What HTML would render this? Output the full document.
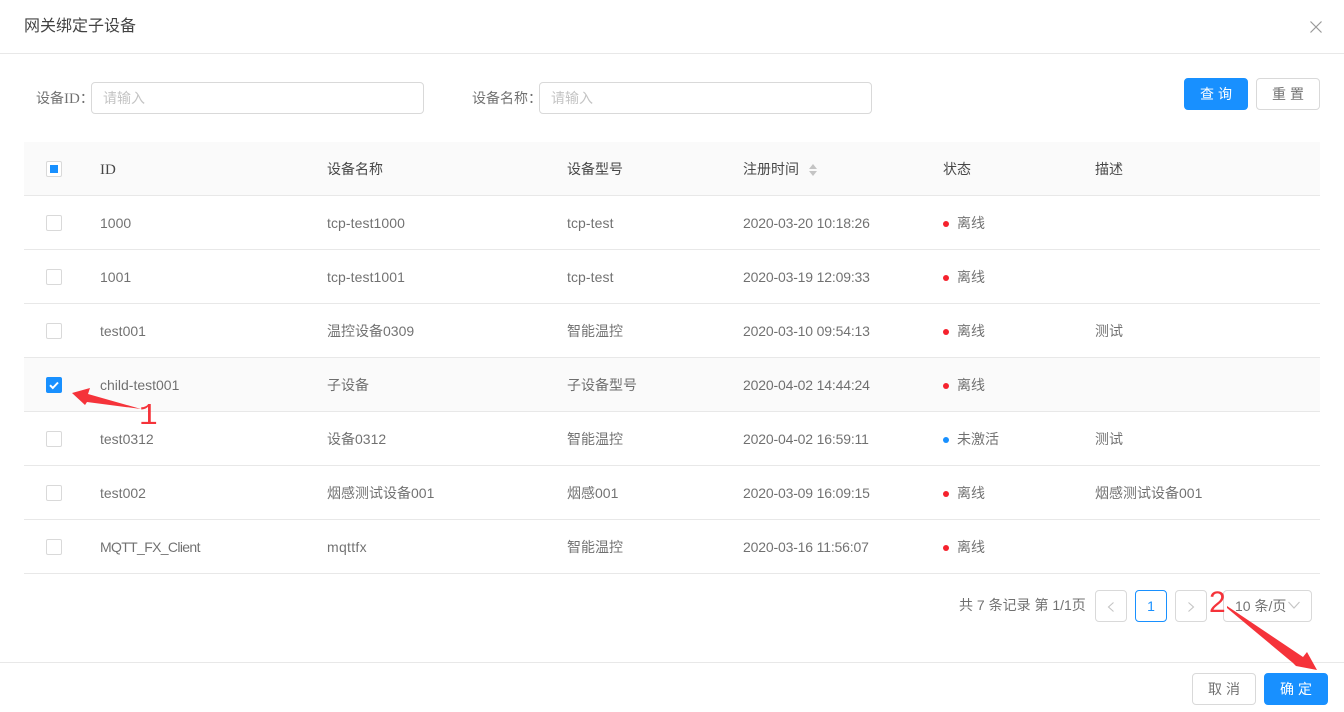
<!DOCTYPE html>
<html><head><meta charset="utf-8"><style>
html,body{margin:0;padding:0;background:#fff}
body{width:1344px;height:712px;position:relative;overflow:hidden;font-family:"Liberation Sans","Noto Sans CJK SC",sans-serif;font-size:14px;color:rgba(0,0,0,.56)}
.a{position:absolute;white-space:nowrap;line-height:20px}
.l{position:absolute;height:1px;background:#e8e8e8}
.cb{position:absolute;left:46px;width:14px;height:14px;border:1px solid #d9d9d9;border-radius:2px;background:#fff}
.h{color:rgba(0,0,0,.72);top:159px}
.t{letter-spacing:-.17px}
.s{letter-spacing:.08px}
.box{position:absolute;box-sizing:border-box;border:1px solid #d9d9d9;border-radius:4px;background:#fff}
.btn{position:absolute;box-sizing:border-box;height:32px;width:64px;border-radius:4px;border:1px solid #d9d9d9;background:#fff;text-align:center;line-height:30px;letter-spacing:4px;text-indent:4px}
.p{background:#1890ff;border-color:#1890ff;color:#fff}
.d{position:absolute;left:943px;width:6px;height:6px;border-radius:50%;background:#f5222d}
.f{font-family:"Liberation Serif",serif;font-size:15px}
</style></head><body>
<div class="a" style="left:24px;top:16px;font-size:16px;line-height:22px;color:rgba(0,0,0,.74)">网关绑定子设备</div>
<svg style="position:absolute;left:1310px;top:21px" width="12" height="12" viewBox="0 0 12 12"><path d="M.5.5l11 11M11.500.5l-11 11" stroke="#999" stroke-width="1.200" fill="none"/></svg>
<div class="l" style="left:0;top:53px;width:1344px"></div>

<div class="a" style="left:36px;top:88px"><span>设备</span><span class="f">ID</span>：</div>
<div class="box" style="left:91px;top:82px;width:333px;height:32px"></div>
<div class="a" style="left:103px;top:88px;color:#c4c4c4">请输入</div>
<div class="a" style="left:472px;top:88px">设备名称：</div>
<div class="box" style="left:539px;top:82px;width:333px;height:32px"></div>
<div class="a" style="left:551px;top:88px;color:#c4c4c4">请输入</div>
<div class="btn p" style="left:1184px;top:78px">查询</div>
<div class="btn" style="left:1256px;top:78px">重置</div>

<div style="position:absolute;left:24px;top:142px;width:1296px;height:53px;background:#fafafa"></div>
<div style="position:absolute;left:24px;top:358px;width:1296px;height:53px;background:#fafafa"></div>
<div class="l" style="left:24px;top:195px;width:1296px"></div>
<div class="l" style="left:24px;top:249px;width:1296px"></div>
<div class="l" style="left:24px;top:303px;width:1296px"></div>
<div class="l" style="left:24px;top:357px;width:1296px"></div>
<div class="l" style="left:24px;top:411px;width:1296px"></div>
<div class="l" style="left:24px;top:465px;width:1296px"></div>
<div class="l" style="left:24px;top:519px;width:1296px"></div>
<div class="l" style="left:24px;top:573px;width:1296px"></div>

<div class="cb" style="top:161px"></div>
<div style="position:absolute;left:50px;top:165px;width:8px;height:8px;background:#1890ff"></div>
<div class="a h f" style="left:100px;top:160px">ID</div>
<div class="a h" style="left:327px">设备名称</div>
<div class="a h" style="left:567px">设备型号</div>
<div class="a h" style="left:743px">注册时间</div>
<svg style="position:absolute;left:809px;top:163px" width="8" height="13" viewBox="0 0 8 13"><path d="M4 1l4 5H0zM4 13L0 8h8z" fill="#c4c4c4"/></svg>
<div class="a h" style="left:943px">状态</div>
<div class="a h" style="left:1095px">描述</div>

<div class="cb" style="top:215px"></div>
<div class="a" style="left:100px;top:213px">1000</div>
<div class="a s" style="left:327px;top:213px">tcp-test1000</div>
<div class="a s" style="left:567px;top:213px">tcp-test</div>
<div class="a t" style="left:743px;top:213px">2020-03-20 10:18:26</div>
<div class="d" style="top:221px"></div>
<div class="a" style="left:957px;top:213px">离线</div>

<div class="cb" style="top:269px"></div>
<div class="a" style="left:100px;top:267px">1001</div>
<div class="a s" style="left:327px;top:267px">tcp-test1001</div>
<div class="a s" style="left:567px;top:267px">tcp-test</div>
<div class="a t" style="left:743px;top:267px">2020-03-19 12:09:33</div>
<div class="d" style="top:275px"></div>
<div class="a" style="left:957px;top:267px">离线</div>

<div class="cb" style="top:323px"></div>
<div class="a" style="left:100px;top:321px">test001</div>
<div class="a" style="left:327px;top:321px">温控设备0309</div>
<div class="a" style="left:567px;top:321px">智能温控</div>
<div class="a t" style="left:743px;top:321px">2020-03-10 09:54:13</div>
<div class="d" style="top:329px"></div>
<div class="a" style="left:957px;top:321px">离线</div>
<div class="a" style="left:1095px;top:321px">测试</div>

<div class="cb" style="top:377px;background:#1890ff;border-color:#1890ff"></div>
<svg style="position:absolute;left:46px;top:377px" width="16" height="16" viewBox="0 0 16 16"><path d="M4 8.200l2.800 2.800L12 5.500" stroke="#fff" stroke-width="2" fill="none"/></svg>
<div class="a" style="left:100px;top:375px">child-test001</div>
<div class="a" style="left:327px;top:375px">子设备</div>
<div class="a" style="left:567px;top:375px">子设备型号</div>
<div class="a t" style="left:743px;top:375px">2020-04-02 14:44:24</div>
<div class="d" style="top:383px"></div>
<div class="a" style="left:957px;top:375px">离线</div>

<div class="cb" style="top:431px"></div>
<div class="a" style="left:100px;top:429px">test0312</div>
<div class="a" style="left:327px;top:429px">设备0312</div>
<div class="a" style="left:567px;top:429px">智能温控</div>
<div class="a t" style="left:743px;top:429px">2020-04-02 16:59:11</div>
<div class="d" style="top:437px;background:#1890ff"></div>
<div class="a" style="left:957px;top:429px">未激活</div>
<div class="a" style="left:1095px;top:429px">测试</div>

<div class="cb" style="top:485px"></div>
<div class="a" style="left:100px;top:483px">test002</div>
<div class="a" style="left:327px;top:483px">烟感测试设备001</div>
<div class="a" style="left:567px;top:483px">烟感001</div>
<div class="a t" style="left:743px;top:483px">2020-03-09 16:09:15</div>
<div class="d" style="top:491px"></div>
<div class="a" style="left:957px;top:483px">离线</div>
<div class="a" style="left:1095px;top:483px">烟感测试设备001</div>

<div class="cb" style="top:539px"></div>
<div class="a" style="left:100px;top:537px;letter-spacing:-.65px">MQTT_FX_Client</div>
<div class="a" style="left:327px;top:537px;letter-spacing:.3px">mqttfx</div>
<div class="a" style="left:567px;top:537px">智能温控</div>
<div class="a t" style="left:743px;top:537px">2020-03-16 11:56:07</div>
<div class="d" style="top:545px"></div>
<div class="a" style="left:957px;top:537px">离线</div>

<div class="a" style="left:959px;top:595px;font-size:14px">共 7 条记录 第 1/1页</div>
<div class="box" style="left:1095px;top:590px;width:32px;height:32px"></div>
<svg style="position:absolute;left:1106px;top:601px" width="10" height="12" viewBox="0 0 10 12"><path d="M7.500 1.500L2.500 6l5 4.500" stroke="#c4c4c4" fill="none" stroke-width="1.100"/></svg>
<div class="box" style="left:1135px;top:590px;width:32px;height:32px;border-color:#1890ff;color:#1890ff;text-align:center;line-height:30px">1</div>
<div class="box" style="left:1175px;top:590px;width:32px;height:32px"></div>
<svg style="position:absolute;left:1186px;top:601px" width="10" height="12" viewBox="0 0 10 12"><path d="M2.500 1.500L7.500 6l-5 4.500" stroke="#c4c4c4" fill="none" stroke-width="1.100"/></svg>
<div class="box" style="left:1223px;top:590px;width:89px;height:32px"></div>
<div class="a" style="left:1235px;top:596px">10 条/页</div>
<svg style="position:absolute;left:1287px;top:600px" width="14" height="10" viewBox="0 0 14 10"><path d="M1.500 2L7 8l5.500-6" stroke="#c4c4c4" fill="none" stroke-width="1.100"/></svg>

<div class="l" style="left:0;top:662px;width:1344px"></div>
<div class="btn" style="left:1192px;top:673px">取消</div>
<div class="btn p" style="left:1264px;top:673px">确定</div>

<svg style="position:absolute;left:0;top:0" width="1344" height="712" viewBox="0 0 1344 712"><path d="M72 393L90 388L88 394L141 409L87 402L85 405Z" fill="#f5333a"/><path d="M1227 606L1303 657L1307 652L1317 670L1296 666L1293 663L1227 608Z" fill="#f5333a"/></svg>
<div class="a" style="left:139px;top:401px;font-size:31px;line-height:31px;color:#f5333a;font-family:'Liberation Mono',monospace">1</div>
<div class="a" style="left:1209px;top:588px;font-size:30px;line-height:30px;color:#f5333a">2</div>
</body></html>
